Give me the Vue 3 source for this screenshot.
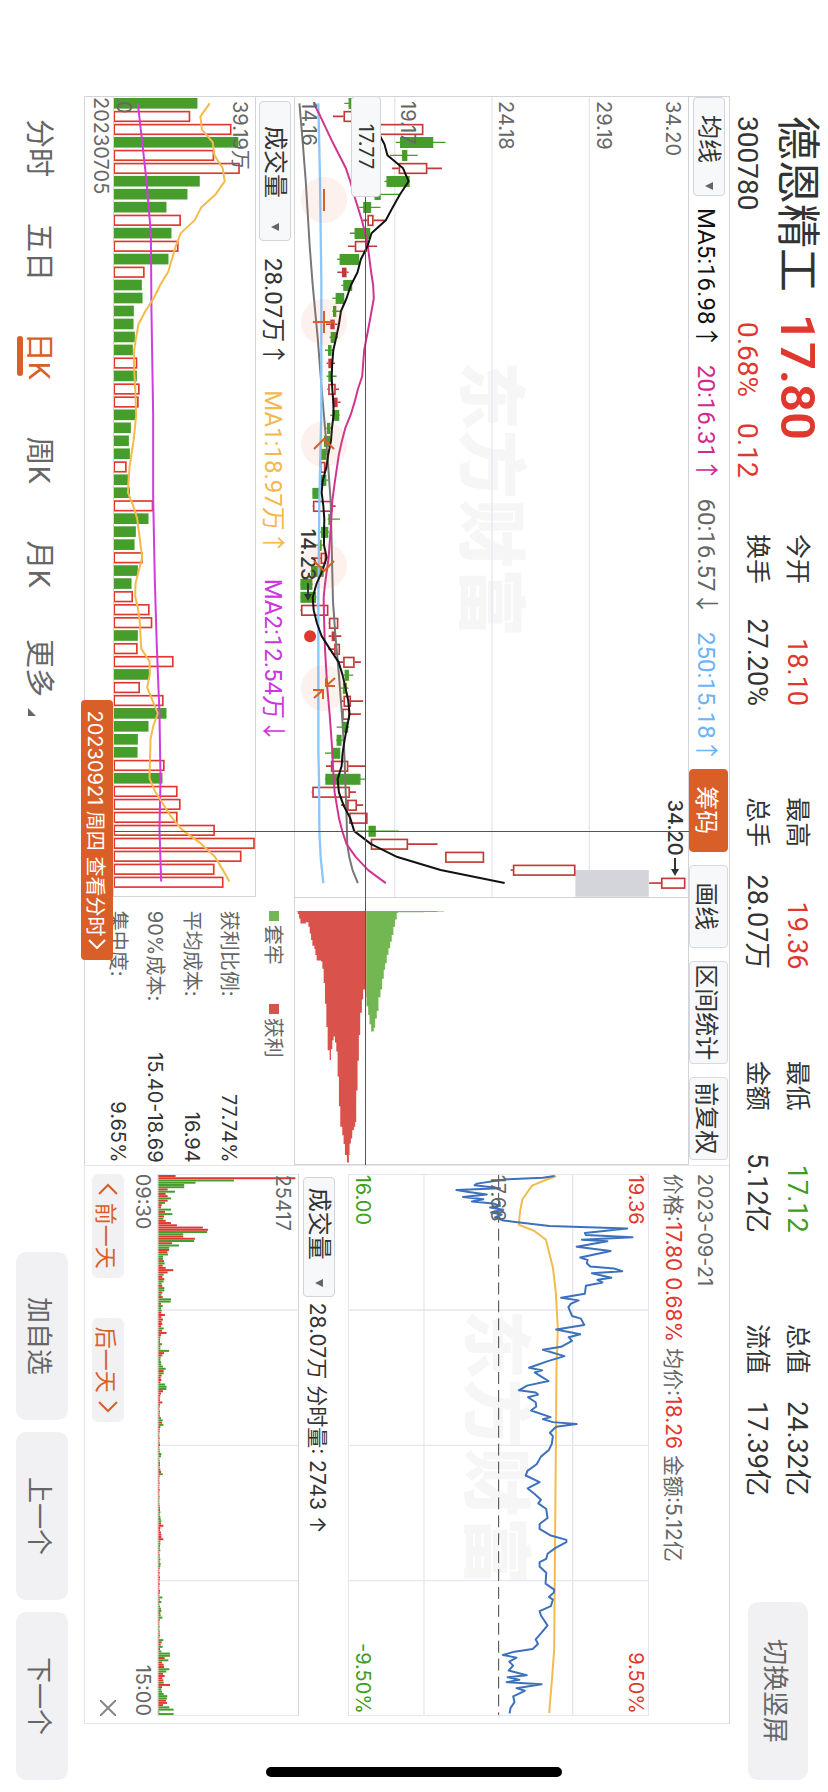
<script setup>
import { ref } from 'vue';

const stats = [
  [
    { label: '今开', value: '18.10', tone: 'up' },
    { label: '换手', value: '27.20%' }
  ],
  [
    { label: '最高', value: '19.36', tone: 'up' },
    { label: '总手', value: '28.07万' }
  ],
  [
    { label: '最低', value: '17.12', tone: 'down' },
    { label: '金额', value: '5.12亿' }
  ],
  [
    { label: '总值', value: '24.32亿' },
    { label: '流值', value: '17.39亿' }
  ]
];

const averages = [
  { text: 'MA5:16.98↑', tone: 'ma5' },
  { text: '20:16.31↑', tone: 'ma20' },
  { text: '60:16.57↓', tone: 'ma60' },
  { text: '250:15.18↑', tone: 'ma250' }
];

const priceTicks = [
  { label: '29.19', at: 75 },
  { label: '24.18', at: 50 },
  { label: '19.17', at: 25 },
  { label: '14.16', at: 0 }
];

const chipRows = [
  { label: '获利比例:', value: '77.74%' },
  { label: '平均成本:', value: '16.94' },
  { label: '90%成本:', value: '15.40-18.69' },
  { label: '集中度:', value: '9.65%' }
];

const periods = ['分时', '五日', '日K', '周K', '月K', '更多'];
const period = ref('日K');

// chart units: three per pixel, one candle every 39
const K_BASE = 43;
const K_HEIGHT = 1182;
const STEP = 39;
const ky = v => K_HEIGHT - (v - K_BASE);

// low, body low, body high, high, 1 = rising
const candleData = [
  [190, 205, 235, 240, 0], [156, 188, 215, 230, 1], [250, 280, 428, 428, 1], [345, 360, 456, 495, 0],
  [328, 366, 378, 411, 0], [334, 354, 440, 484, 1], [311, 319, 385, 385, 0], [283, 283, 298, 355, 0],
  [235, 249, 269, 299, 0], [245, 260, 278, 312, 1], [207, 223, 266, 266, 0], [201, 222, 258, 289, 1],
  [168, 178, 233, 233, 0], [169, 183, 197, 203, 1], [181, 189, 212, 212, 0], [154, 166, 188, 188, 0],
  [154, 158, 164, 180, 0], [135, 148, 161, 170, 1], [146, 151, 163, 171, 0], [132, 143, 150, 156, 0],
  [137, 142, 154, 162, 1], [137, 144, 152, 167, 0], [139, 142, 164, 174, 1], [154, 157, 170, 179, 1],
  [148, 156, 173, 176, 0], [136, 140, 146, 152, 0], [128, 131, 145, 150, 0], [117, 122, 134, 138, 0],
  [116, 117, 133, 133, 1], [117, 121, 134, 141, 0], [95, 96, 115, 118, 0], [95, 96, 155, 164, 1],
  [140, 144, 150, 177, 0], [117, 122, 140, 144, 0], [100, 115, 120, 127, 0], [90, 119, 135, 136, 1],
  [88, 92, 126, 126, 0], [58, 60, 92, 95, 0], [58, 60, 103, 107, 0], [58, 60, 142, 142, 1],
  [143, 144, 172, 172, 1], [143, 152, 164, 181, 1], [142, 160, 177, 177, 1], [172, 187, 221, 240, 1],
  [188, 193, 202, 217, 0], [175, 188, 196, 203, 0], [180, 188, 210, 247, 1], [182, 184, 206, 240, 1],
  [167, 186, 200, 205, 0], [165, 169, 180, 186, 0], [132, 154, 176, 176, 0], [135, 150, 202, 255, 1],
  [132, 135, 237, 253, 0], [92, 94, 207, 225, 1], [180, 199, 228, 247, 1], [205, 205, 260, 260, 1],
  [228, 265, 283, 355, 0], [267, 270, 382, 471, 1], [494, 494, 611, 611, 1], [691, 698, 886, 886, 1],
  [1108, 1144, 1217, 1217, 1]
];

const candles = candleData.map(([low, from, to, high, up], i) => ({
  x: 19 + STEP * i,
  low,
  from,
  to,
  high,
  cls: up ? (to - from < 16 ? 'candle-up solid' : 'candle-up') : 'candle-down'
}));

const toPoints = (list, dx, fy) => list.map(([x, v]) => `${x - dx},${fy(v)}`).join(' ');

const ma5 = toPoints([
  [145, 288], [175, 303], [190, 311], [223, 320], [262, 367], [301, 384], [340, 358], [379, 336], [418, 315],
  [457, 272], [496, 260], [535, 240], [574, 230], [613, 210], [652, 197], [691, 180], [730, 174], [769, 166],
  [808, 157], [847, 154], [886, 152], [925, 154], [964, 157], [1000, 158], [1042, 153], [1080, 150], [1120, 142],
  [1160, 136], [1200, 125], [1235, 122], [1275, 127], [1315, 130], [1355, 129], [1393, 129], [1430, 137],
  [1470, 124], [1510, 106], [1550, 95], [1588, 98], [1628, 108], [1666, 122], [1705, 147], [1744, 173],
  [1783, 185], [1822, 194], [1860, 202], [1900, 206], [1940, 198], [1978, 191], [2017, 185], [2056, 182],
  [2095, 170], [2135, 174], [2174, 188], [2212, 208], [2251, 220], [2290, 271], [2329, 350], [2368, 480],
  [2407, 673]
], 48, ky);
const ma20 = toPoints([
  [67, 98], [106, 118], [184, 155], [262, 195], [301, 208], [360, 225], [418, 243], [480, 259], [574, 271],
  [613, 277], [652, 279], [730, 265], [808, 250], [886, 244], [925, 231], [960, 222], [1000, 210], [1042, 193],
  [1080, 183], [1120, 174], [1200, 162], [1260, 154], [1315, 151], [1430, 143], [1510, 132], [1550, 128],
  [1610, 129], [1705, 132], [1822, 139], [1900, 146], [2010, 154], [2056, 156], [2135, 161], [2212, 174],
  [2251, 184], [2290, 197], [2329, 225], [2368, 262], [2407, 315]
], 48, ky);
const ma60 = toPoints([
  [67, 55], [184, 65], [300, 74], [496, 86], [613, 95], [770, 110], [886, 119], [960, 125], [1120, 139],
  [1260, 149], [1430, 153], [1560, 156], [1660, 163], [1783, 174], [1900, 183], [2010, 190], [2095, 193],
  [2212, 197], [2290, 199], [2329, 205], [2368, 215], [2407, 231]
], 48, ky);
const ma250 = toPoints([
  [67, 112], [300, 117], [600, 121], [990, 121], [1260, 115], [1560, 112], [2010, 112], [2095, 114],
  [2251, 115], [2330, 119], [2407, 127]
], 48, ky);

// chip distribution: price level, amount
const stepPath = list => {
  const head = `M39 ${ky(list[0][0])}`;
  const body = list.map(([v, x]) => `V${ky(v)}H${x - 468}`).join('');
  return `${head}${body}V${ky(list[list.length - 1][0])}H39Z`;
};
const chipProfit = stepPath([
  [46, 508], [50, 516], [54, 530], [58, 545], [70, 545], [74, 541], [82, 555], [86, 575], [90, 595], [94, 612],
  [100, 622], [103, 640], [107, 657], [120, 660], [124, 682], [128, 725], [132, 788], [136, 858], [140, 928],
  [146, 958], [150, 925], [154, 898], [158, 887], [162, 905], [166, 932], [170, 1008], [174, 1098], [178, 1160],
  [184, 1185], [188, 1212], [192, 1245], [198, 1268], [204, 1245], [206, 1210], [210, 1195], [214, 1170],
  [219, 1160], [223, 1145], [226, 1050], [230, 960], [234, 882], [238, 815], [243, 775], [247, 745], [254, 768],
  [257, 768]
]);
const chipLoss = stepPath([
  [257, 795], [262, 822], [266, 850], [271, 872], [279, 860], [283, 832], [288, 810], [293, 768], [299, 745],
  [304, 712], [309, 685], [313, 665], [318, 640], [323, 620], [328, 600], [333, 580], [338, 555], [343, 533],
  [348, 513], [352, 511], [430, 510], [470, 509], [490, 509]
]);

// negative = falling day
const V_BASE = 101;
const V_HEIGHT = 425;
const vy = v => V_HEIGHT - (v - V_BASE);
const volumes = [
  -353, 331, 455, -476, 403, 480, -360, -323, -260, 303, -275, 296, -266, 194, -186, -188, -162, -161, -165, -159,
  172, -171, 179, 176, -168, -153, -147, -150, 140, -144, -150, 220, -206, -168, -164, 188, -174, -155, 159, 209,
  217, -174, 173, 281, -210, 180, 251, -260, -206, -174, -173, 254, -248, 293, 302, 293, 405, 525, 485, 404, 431
].map((v, i) => ({ x: 3 + STEP * i, h: Math.abs(v) - V_BASE, up: v > 0 }));

const volMa1 = toPoints([
  [67, 390], [106, 362], [145, 366], [184, 399], [223, 404], [262, 429], [301, 435], [340, 408], [379, 365],
  [418, 345], [457, 303], [496, 288], [574, 265], [613, 241], [652, 222], [691, 197], [730, 176], [769, 169],
  [808, 163], [847, 162], [925, 166], [1003, 169], [1081, 161], [1159, 149], [1237, 144], [1276, 160],
  [1315, 172], [1354, 177], [1432, 187], [1470, 177], [1510, 167], [1549, 166], [1588, 175], [1627, 180],
  [1705, 184], [1744, 209], [1783, 210], [1822, 202], [1861, 218], [1900, 234], [1939, 220], [1978, 212],
  [2095, 209], [2135, 226], [2212, 275], [2250, 307], [2290, 362], [2330, 405], [2368, 428], [2405, 449]
], 48, vy);
const volMa2 = toPoints([
  [67, 174], [300, 200], [457, 213], [700, 215], [1003, 220], [1250, 220], [1500, 225], [1700, 231],
  [1900, 239], [2095, 242], [2250, 239], [2405, 244]
], 48, vy);

// intraday price
const ty = v => 906 - (v - 172);
const dayPrice = toPoints([
  [70, 795], [75, 760], [80, 650], [93, 560], [98, 553], [107, 630], [112, 498], [118, 535], [126, 590],
  [133, 518], [140, 580], [147, 545], [153, 610], [160, 630], [165, 600], [172, 640], [180, 603], [186, 635],
  [195, 615], [204, 640], [208, 670], [221, 780], [228, 1015], [242, 887], [248, 890], [255, 1031], [262, 878],
  [267, 955], [283, 862], [296, 965], [316, 873], [323, 895], [333, 893], [343, 903], [349, 975], [357, 1000],
  [363, 908], [377, 967], [383, 925], [391, 940], [401, 890], [425, 887], [437, 815], [445, 868], [455, 845],
  [465, 837], [492, 848], [500, 875], [519, 885], [533, 800], [547, 873], [556, 838], [567, 848], [585, 815],
  [594, 760], [613, 825], [628, 775], [648, 718], [656, 758], [662, 735], [675, 755], [688, 777], [702, 712],
  [716, 687], [723, 738], [729, 745], [737, 715], [752, 738], [765, 740], [777, 724], [797, 783], [803, 760],
  [812, 790], [818, 862], [826, 800], [844, 781], [854, 790], [877, 787], [896, 778], [916, 754], [939, 741],
  [959, 713], [973, 708], [993, 750], [1012, 714], [1029, 735], [1046, 754], [1057, 746], [1074, 770],
  [1101, 774], [1119, 750], [1134, 750], [1154, 784], [1167, 831], [1174, 831], [1192, 797], [1209, 774],
  [1224, 770], [1234, 750], [1247, 750], [1266, 770], [1299, 768], [1317, 794], [1326, 793], [1339, 778],
  [1347, 790], [1367, 784], [1382, 750], [1395, 754], [1425, 774], [1449, 754], [1467, 738], [1481, 745],
  [1496, 729], [1504, 674], [1514, 639], [1522, 680], [1534, 658], [1546, 670], [1561, 656], [1575, 711],
  [1581, 653], [1589, 689], [1596, 650], [1602, 756], [1614, 680], [1622, 705], [1639, 670], [1656, 674],
  [1674, 662], [1690, 659]
], 67, ty);
const dayAverage = toPoints([
  [70, 800], [82, 768], [99, 727], [140, 698], [175, 691], [217, 687], [235, 733], [262, 769], [345, 790],
  [420, 799], [530, 805], [650, 801], [898, 799], [1499, 794], [1579, 788], [1689, 779]
], 67, ty);

// one bar per minute, negative = price fell
const minuteVolumes = [
  52, 413, -228, -112, -78, -78, 28, -50, 22, 28, -38, 28, -20, 10, 8, -38, 20, -42, 17, -15,
  22, 38, 56, 134, 150, -147, -75, 75, 110, -108, 41, -62, -33, 32, 27, -29, -14, -14, 17, -19,
  13, 22, 45, 28, -16, 12, 18, -16, -10, 12, -18, -18, 12, -9, 13, -38, -37, 8, -13, -8,
  -10, 9, 20, 9, 14, 10, 12, 8, -16, 11, 25, 8, -6, 5, -5, -11, 6, -6, -32, 17,
  12, -7, -6, -8, -9, -14, -22, 16, -16, 10, 7, 9, 6, -20, -25, -24, 14, 8, 6, 4,
  5, 12, 5, -4, 3, -5, 4, 4, -8, -13, 11, -15, 6, 4, 4, -3, 3, 4, 3, -4,
  5, 3, -4, 4, -9, -8, 3, -4, -5, 5, -4, 6, 8, -13, 4, 3, 3, -4, 3, 3,
  4, 3, 3, -4, 3, -3, 3, 4, -5, 5, -6, 4, -6, -7, -9, 8, 15, 6, 5, 8,
  9, 9, 15, -6, -6, -5, 4, -6, 3, 4, -4, -6, 4, -7, -6, 4, 3, 4, 3, 5,
  4, 3, 4, 3, 3, 5, 4, 3, -12, 4, -9, 3, -5, -8, -9, 6, -7, -12, 4, 3,
  3, -4, -3, -4, 4, -5, 3, -15, 10, 7, -13, 5, -9, -35, -35, 19, -30, 11, 16, 17,
  -33, -24, 14, 19, 12, 15, -16, 35, 11, -9, -11, -16, -27, -26, 23, 26, 14, -33, -46, 3,
  -46
].map((v, i) => ({ x: (i * 1629) / 241, h: Math.abs(v), up: v > 0 }));
</script>

<template>
  <div class="viewport">
    <div class="landscape">
      <header class="header">
        <div class="quote">
          <h1 class="name">德恩精工</h1>
          <strong class="price">17.80</strong>
          <span class="code">300780</span>
          <span class="change"><span>0.68%</span><span>0.12</span></span>
        </div>
        <div class="stats">
          <dl v-for="(group, i) in stats" :key="i" class="stat-group">
            <div v-for="item in group" :key="item.label" class="stat">
              <dt>{{ item.label }}</dt>
              <dd :class="item.tone">{{ item.value }}</dd>
            </div>
          </dl>
        </div>
        <button type="button" class="soft-button switch">切换竖屏</button>
      </header>

      <main class="panels">
        <section class="daily">
          <div class="toolbar">
            <span class="picker">
              <select aria-label="主图指标"><option>均线</option></select>
            </span>
            <div class="averages">
              <span v-for="item in averages" :key="item.text" :class="item.tone">{{ item.text }}</span>
            </div>
            <div class="tools">
              <button type="button" class="tool active">筹码</button>
              <button type="button" class="tool">画线</button>
              <button type="button" class="tool wide">区间统计</button>
              <button type="button" class="tool">前复权</button>
            </div>
          </div>

          <div class="charts">
            <div class="kline">
              <span class="watermark">东方财富</span>
              <svg class="plot" viewBox="0 0 2400 1182" preserveAspectRatio="none">
                <path class="grid" d="M0 883H2400M0 590H2400M0 297H2400" />
                <rect class="gap-block" x="2320" y="118" width="80" height="221" />
                <g v-for="c in candles" :key="c.x" :class="c.cls">
                  <path :d="`M${c.x} ${ky(c.high)}V${ky(c.to)}M${c.x} ${ky(c.from)}V${ky(c.low)}`" />
                  <rect v-if="c.cls === 'candle-up'" :x="c.x - 14" :y="ky(c.to) + 2" width="29" :height="c.to - c.from - 4" />
                  <rect v-else :x="c.x - 14" :y="ky(c.to)" width="29" :height="c.to - c.from" />
                </g>
                <polyline class="line gray" :points="ma60" />
                <polyline class="line blue" :points="ma250" />
                <polyline class="line pink" :points="ma20" />
                <polyline class="line black" :points="ma5" />
                <circle class="event" cx="1618" cy="1138" r="18" />
              </svg>
              <span class="axis top">34.20</span>
              <span v-for="t in priceTicks" :key="t.label" class="axis tick" :style="{ bottom: t.at + '%' }">{{ t.label }}</span>
              <span class="mark highest">34.20
                <svg width="19" height="12" viewBox="0 0 19 12"><path d="M0 6H12" stroke="#333" stroke-width="2" /><path d="M11 2L18 6L11 10Z" fill="#333" /></svg>
              </span>
              <span class="mark lowest">14.23
                <svg width="19" height="12" viewBox="0 0 19 12"><path d="M0 6H12" stroke="#333" stroke-width="2" /><path d="M11 2L18 6L11 10Z" fill="#333" /></svg>
              </span>
              <div class="zoomers">
                <button type="button" aria-label="缩小"><svg viewBox="0 0 46 46"><path d="M12 23H34" /></svg></button>
                <button type="button" aria-label="放大"><svg viewBox="0 0 46 46"><path d="M12 23H34M23 12V34" /></svg></button>
                <button type="button" aria-label="左移"><svg viewBox="0 0 46 46"><path d="M28 13L18 23L28 33" /></svg></button>
                <button type="button" aria-label="右移"><svg viewBox="0 0 46 46"><path d="M18 13L28 23L18 33" /></svg></button>
                <button type="button" aria-label="收起">
                  <svg viewBox="0 0 46 46"><path d="M13 12L21 21M21 12V21H13M33 33L25 24M25 34V24H34" /></svg>
                </button>
              </div>
            </div>
            <div class="chips">
              <svg class="plot" viewBox="0 0 804 1182" preserveAspectRatio="none">
                <path class="chip-profit" :d="chipProfit" />
                <path class="chip-loss" :d="chipLoss" />
              </svg>
            </div>
            <div class="cross-h"></div>
            <span class="cross-price">17.77</span>
          </div>

          <div class="lower">
            <div class="volume">
              <div class="volume-bar">
                <span class="picker large">
                  <select aria-label="副图指标"><option>成交量</option></select>
                </span>
                <span>28.07万↑</span>
                <span class="vol-ma1">MA1:18.97万↑</span>
                <span class="vol-ma2">MA2:12.54万↓</span>
              </div>
              <div class="volume-chart">
                <svg class="plot" viewBox="0 0 2400 425" preserveAspectRatio="none">
                  <template v-for="v in volumes" :key="v.x">
                    <rect v-if="v.up" class="bar-up" :x="v.x + 2" :y="425 - v.h + 2" width="29" :height="v.h - 4" />
                    <rect v-else class="bar-down" :x="v.x" :y="425 - v.h" width="32" :height="v.h" />
                  </template>
                  <polyline class="line purple" :points="volMa2" />
                  <polyline class="line yellow" :points="volMa1" />
                </svg>
                <span class="axis top">39.19万</span>
                <span class="axis zero">0</span>
              </div>
              <div class="dates">20230705</div>
            </div>
            <div class="chip-info">
              <div class="legend">
                <span class="key loss">套牢</span>
                <span class="key profit">获利</span>
              </div>
              <dl>
                <div v-for="row in chipRows" :key="row.label" class="chip-row">
                  <dt>{{ row.label }}</dt>
                  <dd>{{ row.value }}</dd>
                </div>
              </dl>
            </div>
          </div>
          <div class="cross-v"></div>
          <a href="#" class="date-tag" @click.prevent>20230921 周四 查看分时<svg width="10" height="18" viewBox="0 0 10 18"><path d="M1 1L9 9L1 17" /></svg></a>
        </section>

        <section class="intraday">
          <p class="day">2023-09-21</p>
          <p class="summary">价格:<b>17.80 0.68%</b> 均价:<b>18.26</b> 金额:5.12亿</p>
          <div class="day-chart">
            <span class="watermark">东方财富</span>
            <svg class="plot" viewBox="0 0 1629 906" preserveAspectRatio="none">
              <path class="grid" d="M0 228H1629M0 678H1629M407 0V906M815 0V906M1223 0V906" />
              <path class="dashed" d="M0 452H1629" />
              <polyline class="line yellow" :points="dayAverage" />
              <polyline class="line day-blue" :points="dayPrice" />
            </svg>
            <span class="corner tl up">19.36</span>
            <span class="corner tr up">9.50%</span>
            <span class="corner ml">17.68</span>
            <span class="corner bl down">16.00</span>
            <span class="corner br down">-9.50%</span>
          </div>
          <div class="day-bar">
            <span class="picker medium">
              <select aria-label="分时副图"><option>成交量</option></select>
            </span>
            <span>28.07万 分时量: 2743 ↑</span>
          </div>
          <div class="day-volume">
            <svg class="plot" viewBox="0 0 1629 421" preserveAspectRatio="none">
              <path class="grid" d="M407 0V421M815 0V421M1223 0V421" />
              <rect
                v-for="v in minuteVolumes"
                :key="v.x"
                :class="v.up ? 'minute-up' : 'bar-down'"
                :x="v.x"
                :y="421 - v.h"
                width="6"
                :height="v.h"
              />
            </svg>
            <span class="corner peak">25417</span>
          </div>
          <div class="times"><span>09:30</span><span>15:00</span></div>
          <div class="day-nav">
            <button type="button" class="nav-button"><svg width="12" height="20" viewBox="0 0 12 20"><path d="M11 1L2 10L11 19" /></svg>前一天</button>
            <button type="button" class="nav-button">后一天<svg width="12" height="20" viewBox="0 0 12 20"><path d="M1 1L10 10L1 19" /></svg></button>
            <button type="button" class="close" aria-label="关闭">
              <svg width="16" height="16" viewBox="0 0 16 16"><path d="M0 0L16 16M16 0L0 16" /></svg>
            </button>
          </div>
        </section>
      </main>

      <footer class="footer">
        <nav class="periods">
          <button
            v-for="p in periods"
            :key="p"
            type="button"
            class="period"
            :class="{ current: p === period, more: p === '更多' }"
            @click="period = p"
          >{{ p }}</button>
        </nav>
        <div class="actions">
          <button type="button" class="soft-button">加自选</button>
          <button type="button" class="soft-button">上一个</button>
          <button type="button" class="soft-button">下一个</button>
        </div>
      </footer>
      <div class="home-indicator"></div>
    </div>
  </div>
</template>

<style>
html,
body {
  margin: 0;
  background: #fff;
}
</style>

<style scoped>
.viewport {
  position: relative;
  height: 100vh;
  overflow: hidden;
}

.landscape {
  position: absolute;
  top: 0;
  left: 100vw;
  width: 100vh;
  height: 100vw;
  transform: rotate(90deg);
  transform-origin: 0 0;
  display: flex;
  flex-direction: column;
  background: #fff;
  color: #333;
  font-family: Roboto, "Noto Sans CJK SC", sans-serif;
  font-size: 24px;
}

.landscape * {
  box-sizing: border-box;
}

button,
select {
  font: inherit;
  color: inherit;
  border: none;
  padding: 0;
  margin: 0;
}

dl,
dd,
p,
h1 {
  margin: 0;
}

.up {
  color: #e0382f;
}

.down {
  color: #3f9c22;
}

/* header */
.header {
  flex: 0 0 98px;
  display: flex;
  padding: 0 12px 0 116px;
}

.quote {
  flex: 0 0 418px;
  display: grid;
  grid-template-columns: 198px 1fr;
  grid-template-rows: 62px 36px;
  align-items: center;
}

.name {
  font-size: 44px;
  font-weight: 400;
  line-height: 60px;
}

.price {
  font-size: 49px;
  line-height: 60px;
  font-weight: 600;
  color: #e0382f;
}

.code,
.change {
  font-size: 28px;
}

.change {
  display: flex;
  gap: 26px;
  padding-left: 8px;
  color: #e0382f;
}

.stats {
  flex: 1;
  display: flex;
  justify-content: space-between;
  margin-right: 106px;
  padding-top: 11px;
}

.stat-group {
  width: 172px;
}

.stat {
  display: flex;
  justify-content: space-between;
  align-items: center;
  height: 40px;
  line-height: 40px;
}

.stat dt {
  font-size: 25px;
}

.stat dd {
  font-size: 27px;
}

.soft-button {
  background: #f1f1f4;
  border-radius: 10px;
  color: #666;
  font-size: 26px;
}

.switch {
  width: 178px;
  height: 60px;
  margin-top: 20px;
}

/* panels */
.panels {
  flex: 1;
  min-height: 0;
  display: grid;
  grid-template-columns: minmax(0, 1068fr) minmax(0, 559fr);
  grid-template-rows: minmax(0, 1fr);
  margin: 0 68px 0 96px;
  border-top: 1px solid #d3d3da;
}

.daily {
  position: relative;
  display: flex;
  flex-direction: column;
  border-left: 1px solid #d3d3da;
  border-bottom: 1px solid #d3d3da;
}

.toolbar {
  flex: 0 0 40px;
  display: flex;
  align-items: center;
}

.picker {
  position: relative;
  width: 99px;
  height: 32px;
}

.picker select {
  display: block;
  width: 100%;
  height: 100%;
  padding-left: 17px;
  line-height: 30px;
  appearance: none;
  background: #f6f8fa;
  border: 1px solid #d3d3da;
  border-radius: 4px;
}

.picker::after {
  content: "";
  position: absolute;
  right: 6px;
  top: 12px;
  border: 4px solid transparent;
  border-top: 8px solid #666;
  border-bottom: 0;
}

.picker.large {
  width: 140px;
}

.picker.large select {
  padding-left: 24px;
}

.picker.large::after,
.picker.medium::after {
  right: 10px;
}

.picker.medium {
  width: 120px;
  font-family: Roboto, "Noto Sans CJK SC", sans-serif;
  font-size: 24px;
}

.picker.medium select {
  padding-left: 10px;
}

.averages {
  flex: 1;
  display: flex;
  justify-content: space-between;
  margin: 0 6px 0 12px;
  white-space: nowrap;
}

.ma5 {
  color: #111;
}

.ma20 {
  color: #cf2a8c;
}

.ma60 {
  color: #666;
}

.ma250 {
  color: #6db3f8;
}

.tools {
  display: flex;
  gap: 13px;
  margin-right: 5px;
}

.tool {
  width: 83px;
  height: 39px;
  background: #f6f8fa;
  border: 1px solid #d9dae0;
  border-radius: 4px;
  white-space: nowrap;
}

.tool.wide {
  width: 103px;
}

.tool.active {
  background: #d95f28;
  border-color: #d95f28;
  color: #fff;
}

.charts {
  position: relative;
  flex: 1;
  min-height: 0;
  display: grid;
  grid-template-columns: minmax(0, 800fr) minmax(0, 268fr);
  grid-template-rows: minmax(0, 1fr);
  border-top: 1px solid #d3d3da;
  border-bottom: 1px solid #d3d3da;
}

.kline {
  position: relative;
}

.chips {
  border-left: 1px solid #d3d3da;
  border-right: 1px solid #d3d3da;
}

.plot {
  position: relative;
  display: block;
  width: 100%;
  height: 100%;
}

.watermark {
  position: absolute;
  left: 33%;
  top: 49%;
  transform: translateY(-50%);
  font-family: "Noto Sans CJK SC", sans-serif;
  font-size: 69px;
  line-height: 68px;
  font-weight: 900;
  color: #f6f6f6;
  white-space: nowrap;
}

.grid {
  fill: none;
  stroke: #e6e7ee;
  stroke-width: 4;
}

.gap-block {
  fill: #d4d5db;
}

.candle-up path,
.candle-up rect {
  fill: none;
  stroke: #c23a38;
  stroke-width: 5;
}

.candle-up.solid rect {
  fill: #c23a38;
  stroke: none;
}

.candle-down path,
.candle-down rect {
  fill: #469d2b;
  stroke: #469d2b;
  stroke-width: 4;
}

.line {
  fill: none;
  stroke-width: 6;
  stroke-linejoin: round;
}

.line.black {
  stroke: #111;
}

.line.pink {
  stroke: #d03590;
}

.line.gray {
  stroke: #777;
}

.line.blue {
  stroke: #8cc6fb;
  stroke-width: 7;
}

.line.yellow {
  stroke: #f3bb4c;
}

.line.purple {
  stroke: #cf3ce0;
}

.line.day-blue {
  stroke: #3d70bd;
}

.event {
  fill: #e0382f;
}

.axis,
.mark,
.corner {
  position: absolute;
  left: 4px;
  font-family: Inter, "Noto Sans CJK SC", sans-serif;
  font-size: 20px;
  line-height: 20px;
  color: #666;
  white-space: nowrap;
}

.axis.top {
  top: 5px;
}

.axis.tick {
  margin-bottom: 4px;
}

.axis.zero {
  bottom: 0;
}

.mark {
  display: flex;
  align-items: center;
  gap: 2px;
  color: #333;
  font-weight: 500;
}

.mark.highest {
  left: auto;
  right: 20px;
  top: 3px;
}

.mark.lowest {
  left: 54%;
  bottom: 3px;
}

.zoomers {
  position: absolute;
  left: 80px;
  bottom: 6px;
  display: flex;
  gap: 76px;
}

.zoomers button {
  width: 46px;
  height: 46px;
  border-radius: 50%;
  background: rgba(217, 95, 40, 0.09);
}

.zoomers svg {
  display: block;
  fill: none;
  stroke: #d95f28;
  stroke-width: 2;
}

.chip-profit {
  fill: #d9534c;
}

.chip-loss {
  fill: #73b752;
}

.cross-h {
  position: absolute;
  left: 98px;
  right: 0;
  bottom: 70px;
  height: 1px;
  background: #555;
}

.cross-v {
  position: absolute;
  left: 69%;
  top: 40px;
  bottom: 29px;
  width: 1px;
  margin-left: -3px;
  background: #555;
}

.cross-price {
  position: absolute;
  left: -1px;
  bottom: 56px;
  width: 101px;
  height: 30px;
  border: 1px solid #d3d3da;
  border-radius: 4px;
  background: #f6f8fa;
  font-family: Inter, sans-serif;
  font-size: 20px;
  line-height: 28px;
  text-align: center;
}

.lower {
  flex: 0 0 209px;
  display: grid;
  grid-template-columns: minmax(0, 800fr) minmax(0, 268fr);
  grid-template-rows: minmax(0, 1fr);
}

.volume {
  display: flex;
  flex-direction: column;
}

.volume-bar {
  flex: 0 0 38px;
  display: flex;
  align-items: center;
  gap: 24px;
  padding-left: 4px;
  white-space: nowrap;
}

.volume-bar .picker {
  margin-right: -7px;
}

.vol-ma1 {
  color: #f2b94c;
}

.vol-ma2 {
  color: #cc36dc;
}

.volume-chart {
  position: relative;
  flex: 1;
  min-height: 0;
  border: 1px solid #d3d3da;
  border-left: none;
}

.bar-up {
  fill: none;
  stroke: #e0382f;
  stroke-width: 5;
}

.bar-down {
  fill: #469d2b;
}

.minute-up {
  fill: #e0382f;
}

.dates {
  flex: 0 0 28px;
  font-family: Inter, sans-serif;
  font-size: 20px;
  line-height: 24px;
  color: #666;
}

.chip-info {
  padding: 0 2px 0 14px;
  font-family: Inter, "Noto Sans CJK SC", sans-serif;
  font-size: 20px;
}

.legend {
  display: flex;
  gap: 39px;
  height: 47px;
  line-height: 42px;
  color: #666;
}

.key::before {
  content: "";
  display: inline-block;
  width: 10px;
  height: 10px;
  margin-right: 4px;
  vertical-align: 3px;
}

.key.loss::before {
  background: #73b752;
}

.key.profit::before {
  background: #d9534c;
}

.chip-row {
  display: flex;
  justify-content: space-between;
  height: 37px;
  line-height: 37px;
}

.chip-row dt {
  color: #666;
}

.date-tag {
  position: absolute;
  left: 603px;
  bottom: -4px;
  display: flex;
  align-items: center;
  justify-content: center;
  gap: 3px;
  width: 260px;
  height: 32px;
  border-radius: 4px;
  background: #d95f28;
  color: #fff;
  font-family: Inter, "Noto Sans CJK SC", sans-serif;
  font-size: 20px;
  text-decoration: none;
  white-space: nowrap;
}

.date-tag svg,
.nav-button svg,
.close svg {
  fill: none;
  stroke: #fff;
  stroke-width: 2;
}

/* intraday */
.intraday {
  display: flex;
  flex-direction: column;
  padding: 8px 7px 0 8px;
  border: 1px solid #e6e6ea;
  border-top: none;
  font-family: Inter, "Noto Sans CJK SC", sans-serif;
  font-size: 20px;
}

.day,
.summary {
  line-height: 32px;
  color: #666;
  white-space: nowrap;
}

.summary,
.day-bar {
  font-size: 21px;
}

.summary b {
  font-weight: 400;
  color: #e0382f;
}

.day-chart {
  position: relative;
  flex: 1;
  min-height: 0;
  margin-top: 8px;
  border: 1px solid #e6e7ee;
}

.day-chart .watermark {
  left: 25%;
}

.dashed {
  fill: none;
  stroke: #444;
  stroke-width: 3;
  stroke-dasharray: 36 18;
}

.corner {
  left: 0;
}

.corner.tl,
.corner.tr {
  top: 2px;
}

.corner.bl,
.corner.br {
  bottom: 4px;
}

.corner.tr,
.corner.br {
  left: auto;
  right: 1px;
}

.corner.ml {
  top: 140px;
}

.corner.up {
  color: #e0382f;
}

.corner.down {
  color: #3f9c22;
}

.day-bar {
  flex: 0 0 49px;
  display: flex;
  align-items: center;
  gap: 6px;
  padding: 9px 0 0 3px;
  white-space: nowrap;
}

.day-volume {
  position: relative;
  flex: 0 0 140px;
  border: 1px solid #e6e7ee;
  border-top-color: #d3d3da;
}

.corner.peak {
  top: 5px;
}

.times {
  display: flex;
  justify-content: space-between;
  height: 33px;
  line-height: 28px;
  color: #666;
}

.day-nav {
  display: flex;
  align-items: center;
  gap: 40px;
  height: 32px;
  margin-bottom: 7px;
}

.nav-button {
  display: flex;
  align-items: center;
  justify-content: center;
  gap: 8px;
  width: 104px;
  height: 32px;
  border-radius: 6px;
  background: #f1f1f4;
  color: #d95f28;
  font-size: 22px;
}

.nav-button svg {
  stroke: #d95f28;
}

.close {
  display: flex;
  margin-left: auto;
  background: none;
}

.close svg {
  stroke: #888;
}

/* footer */
.footer {
  flex: 0 0 84px;
  display: flex;
  justify-content: space-between;
  align-items: center;
  padding: 0 12px 0 96px;
}

.periods {
  display: flex;
}

.period {
  position: relative;
  width: 104px;
  height: 60px;
  background: none;
  color: #666;
  font-size: 29px;
}

.period.current {
  color: #d95f28;
}

.period.current::after {
  content: "";
  position: absolute;
  left: 32px;
  bottom: 5px;
  width: 40px;
  height: 6px;
  border-radius: 3px;
  background: #d95f28;
}

.period.more::after {
  content: "";
  position: absolute;
  right: 4px;
  bottom: 16px;
  border: 4px solid transparent;
  border-right-color: #666;
  border-bottom-color: #666;
}

.actions {
  display: flex;
  gap: 12px;
}

.actions .soft-button {
  width: 168px;
  height: 52px;
}

.home-indicator {
  position: absolute;
  right: 15px;
  top: 50%;
  width: 10px;
  height: 296px;
  margin-top: -148px;
  border-radius: 5px;
  background: #000;
}
</style>
